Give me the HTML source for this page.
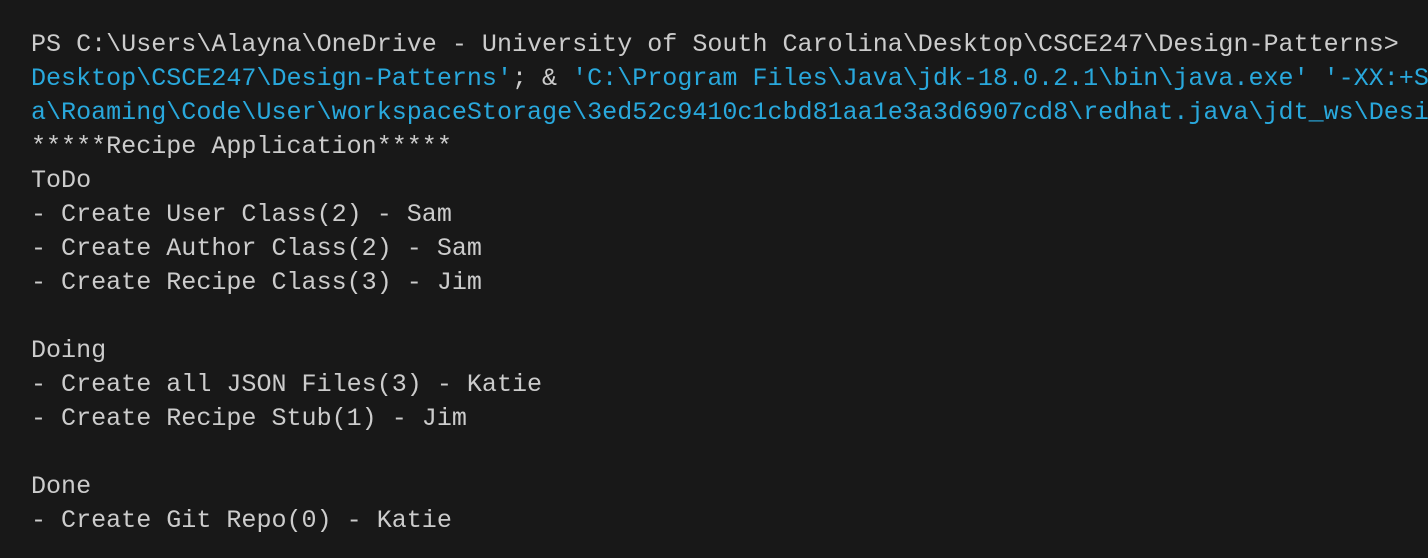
<!DOCTYPE html>
<html><head><meta charset="utf-8"><style>
html,body{margin:0;padding:0;background:#181818;width:1428px;height:558px;overflow:hidden}
pre{margin:0;position:absolute;left:31px;top:28px;font-family:"Liberation Mono",monospace;font-size:25.05px;line-height:34px;color:#cccccc;white-space:pre}
.b{color:#29a8dc}
</style></head><body>
<pre>PS C:\Users\Alayna\OneDrive - University of South Carolina\Desktop\CSCE247\Design-Patterns&gt;
<span class="b">Desktop\CSCE247\Design-Patterns'</span>; &amp; <span class="b">'C:\Program Files\Java\jdk-18.0.2.1\bin\java.exe' '-XX:+S</span>
<span class="b">a\Roaming\Code\User\workspaceStorage\3ed52c9410c1cbd81aa1e3a3d6907cd8\redhat.java\jdt_ws\Desi</span>
*****Recipe Application*****
ToDo
- Create User Class(2) - Sam
- Create Author Class(2) - Sam
- Create Recipe Class(3) - Jim

Doing
- Create all JSON Files(3) - Katie
- Create Recipe Stub(1) - Jim

Done
- Create Git Repo(0) - Katie</pre>
</body></html>
